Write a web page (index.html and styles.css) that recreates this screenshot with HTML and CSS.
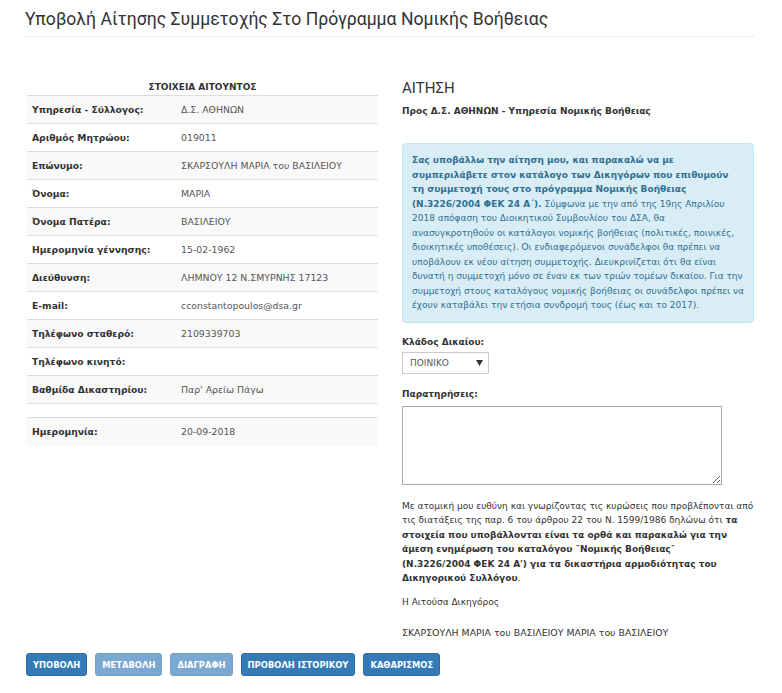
FILE: index.html
```html
<!DOCTYPE html>
<html lang="el">
<head>
<meta charset="utf-8">
<title>Υποβολή Αίτησης Συμμετοχής</title>
<link rel="stylesheet" href="styles.css">
</head>
<body>
<div class="page">
  <header class="page-header">
    <h1>Υποβολή Αίτησης Συμμετοχής Στο Πρόγραμμα Νομικής Βοήθειας</h1>
  </header>

  <div class="columns">
    <section class="col-left">
      <h4 class="table-caption">ΣΤΟΙΧΕΙΑ ΑΙΤΟΥΝΤΟΣ</h4>
      <table class="info">
        <tbody>
          <tr class="odd"><th>Υπηρεσία - Σύλλογος:</th><td>Δ.Σ. ΑΘΗΝΩΝ</td></tr>
          <tr><th>Αριθμός Μητρώου:</th><td>019011</td></tr>
          <tr class="odd"><th>Επώνυμο:</th><td>ΣΚΑΡΣΟΥΛΗ ΜΑΡΙΑ του ΒΑΣΙΛΕΙΟΥ</td></tr>
          <tr><th>Όνομα:</th><td>ΜΑΡΙΑ</td></tr>
          <tr class="odd"><th>Όνομα Πατέρα:</th><td>ΒΑΣΙΛΕΙΟΥ</td></tr>
          <tr><th>Ημερομηνία γέννησης:</th><td>15-02-1962</td></tr>
          <tr class="odd"><th>Διεύθυνση:</th><td>ΛΗΜΝΟΥ 12 Ν.ΣΜΥΡΝΗΣ 17123</td></tr>
          <tr><th>E-mail:</th><td>cconstantopoulos@dsa.gr</td></tr>
          <tr class="odd"><th>Τηλέφωνο σταθερό:</th><td>2109339703</td></tr>
          <tr><th>Τηλέφωνο κινητό:</th><td></td></tr>
          <tr class="odd"><th>Βαθμίδα Δικαστηρίου:</th><td>Παρ' Αρείω Πάγω</td></tr>
          <tr class="spacer"><th></th><td></td></tr>
          <tr class="odd"><th>Ημερομηνία:</th><td>20-09-2018</td></tr>
        </tbody>
      </table>
    </section>

    <section class="col-right">
      <h3 class="form-title">ΑΙΤΗΣΗ</h3>
      <p class="recipient">Προς Δ.Σ. ΑΘΗΝΩΝ - Υπηρεσία Νομικής Βοήθειας</p>

      <div class="alert">
        <strong>Σας υποβάλλω την αίτηση μου, και παρακαλώ να με<br>συμπεριλάβετε στον κατάλογο των Δικηγόρων που επιθυμούν<br>τη συμμετοχή τους στο πρόγραμμα Νομικής Βοήθειας<br>(Ν.3226/2004 ΦΕΚ 24 Α΄).</strong> Σύμφωνα με την από της 19ης Απριλίου<br>2018 απόφαση του Διοικητικού Συμβουλίου του ΔΣΑ, θα<br>ανασυγκροτηθούν οι κατάλογοι νομικής βοήθειας (πολιτικές, ποινικές,<br>διοικητικές υποθέσεις). Οι ενδιαφερόμενοι συνάδελφοι θα πρέπει να<br>υποβάλουν εκ νέου αίτηση συμμετοχής. Διευκρινίζεται ότι θα είναι<br>δυνατή η συμμετοχή μόνο σε έναν εκ των τριών τομέων δικαίου. Για την<br>συμμετοχή στους καταλόγους νομικής βοήθειας οι συνάδελφοι πρέπει να<br>έχουν καταβάλει την ετήσια συνδρομή τους (έως και το 2017).
      </div>

      <label class="field-label" for="klados">Κλάδος Δικαίου:</label>
      <span class="select-wrap">
        <select id="klados" class="select">
          <option>ΠΟΙΝΙΚΟ</option>
          <option>ΠΟΛΙΤΙΚΟ</option>
          <option>ΔΙΟΙΚΗΤΙΚΟ</option>
        </select>
        <svg class="select-arrow" width="7" height="6" viewBox="0 0 7 6" aria-hidden="true"><path d="M0 0 H7 L3.5 6 Z" fill="#333"/></svg>
      </span>

      <label class="field-label remarks-label" for="remarks">Παρατηρήσεις:</label>
      <textarea id="remarks" class="remarks"></textarea>

      <p class="declaration">Με ατομική μου ευθύνη και γνωρίζοντας τις κυρώσεις που προβλέπονται από<br>τις διατάξεις της παρ. 6 του άρθρου 22 του Ν. 1599/1986 δηλώνω ότι <b>τα<br>στοιχεία που υποβάλλονται είναι τα ορθά και παρακαλώ για την<br>άμεση ενημέρωση του καταλόγου ¨Νομικής Βοήθειας¨<br>(Ν.3226/2004 ΦΕΚ 24 Α') για τα δικαστήρια αρμοδιότητας του<br>Δικηγορικού Συλλόγου</b>.</p>

      <p class="signature">Η Αιτούσα Δικηγόρος</p>
      <p class="signer">ΣΚΑΡΣΟΥΛΗ ΜΑΡΙΑ του ΒΑΣΙΛΕΙΟΥ ΜΑΡΙΑ του ΒΑΣΙΛΕΙΟΥ</p>
    </section>
  </div>

  <div class="actions">
    <button class="btn">ΥΠΟΒΟΛΗ</button>
    <button class="btn btn-disabled" disabled>ΜΕΤΑΒΟΛΗ</button>
    <button class="btn btn-disabled" disabled>ΔΙΑΓΡΑΦΗ</button>
    <button class="btn">ΠΡΟΒΟΛΗ ΙΣΤΟΡΙΚΟΥ</button>
    <button class="btn">ΚΑΘΑΡΙΣΜΟΣ</button>
  </div>
</div>
</body>
</html>
```

FILE: styles.css
```css
* { box-sizing: border-box; }

html, body {
  margin: 0;
  padding: 0;
  background: #fff;
}

body {
  font-family: "DejaVu Sans", Verdana, sans-serif;
  font-size: 9px;
  color: #333;
}

.page {
  width: 782px;
  padding: 0 27px 0 25px;
}

.page-header {
  padding-top: 8px;
  padding-bottom: 5px;
  border-bottom: 1px solid #eee;
}

.page-header h1 {
  margin: 0;
  font-family: Roboto, "Liberation Sans", sans-serif;
  font-weight: 400;
  font-size: 17.6px;
  line-height: 23px;
  color: #333;
}

.columns {
  display: flex;
  align-items: flex-start;
  gap: 24px;
  margin-top: 42px;
}

.col-left {
  width: 351px;
  margin-left: 2px;
}

.col-right {
  width: 352px;
  display: flex;
  flex-direction: column;
  align-items: flex-start;
}

.table-caption {
  margin: 0;
  text-align: center;
  font-size: 9px;
  font-weight: 700;
  line-height: 16px;
  color: #333;
}

.info {
  width: 100%;
  border-collapse: collapse;
}

.info tr { height: 28px; }
.info tr.odd { background: #f9f9f9; }
.info tr.spacer { height: 14px; }

.info th,
.info td {
  border-top: 1px solid #ddd;
  padding: 0 5px;
  text-align: left;
  vertical-align: middle;
  font-size: 9.2px;
}

.info th {
  width: 149px;
  font-weight: 700;
  color: #333;
}

.info td {
  color: #555;
  font-size: 9.35px;
}

.form-title {
  margin: 0;
  font-family: Roboto, "Liberation Sans", sans-serif;
  font-weight: 400;
  font-size: 15px;
  line-height: 18px;
  color: #333;
}

.recipient {
  margin: 7px 0 0;
  font-weight: 700;
  line-height: 14px;
}

.alert {
  align-self: stretch;
  margin-top: 25px;
  padding: 9px 9px;
  background: #d9edf7;
  border: 1px solid #bce8f1;
  border-radius: 4px;
  color: #31708f;
  line-height: 14.5px;
  white-space: nowrap;
}

.field-label {
  display: block;
  font-weight: 700;
  line-height: 14px;
  margin-top: 12px;
}

.remarks-label { margin-top: 13px; }

.select-wrap {
  position: relative;
  display: inline-block;
  margin-top: 3px;
}

.select {
  appearance: none;
  -webkit-appearance: none;
  width: 87px;
  height: 22px;
  padding: 0 0 0 7px;
  border: 1px solid #ccc;
  border-radius: 0;
  background: #fff;
  font-family: "DejaVu Sans", Verdana, sans-serif;
  font-size: 9px;
  color: #555;
}

.select-arrow {
  position: absolute;
  right: 6px;
  top: 8px;
  pointer-events: none;
}

.remarks {
  display: block;
  margin: 5px 0 0;
  width: 320px;
  height: 79px;
  border: 1px solid #a9a9a9;
  resize: both;
  font-family: "DejaVu Sans", Verdana, sans-serif;
  font-size: 9px;
}

.declaration {
  margin: 14px 0 0;
  line-height: 14.6px;
  white-space: nowrap;
}

.signature {
  margin: 9px 0 0;
  line-height: 14px;
}

.signer {
  margin: 17px 0 0;
  line-height: 14px;
  font-size: 9.4px;
}

.actions {
  display: flex;
  gap: 8px;
  margin-top: 13px;
  margin-left: 1px;
}

.btn {
  height: 23px;
  padding: 0 6px;
  border: 1px solid #2e6da4;
  border-radius: 3px;
  background: #337ab7;
  color: #fff;
  font-family: "DejaVu Sans", Verdana, sans-serif;
  font-size: 8.4px;
  font-weight: 700;
}

.btn-disabled {
  opacity: 0.65;
}
```
